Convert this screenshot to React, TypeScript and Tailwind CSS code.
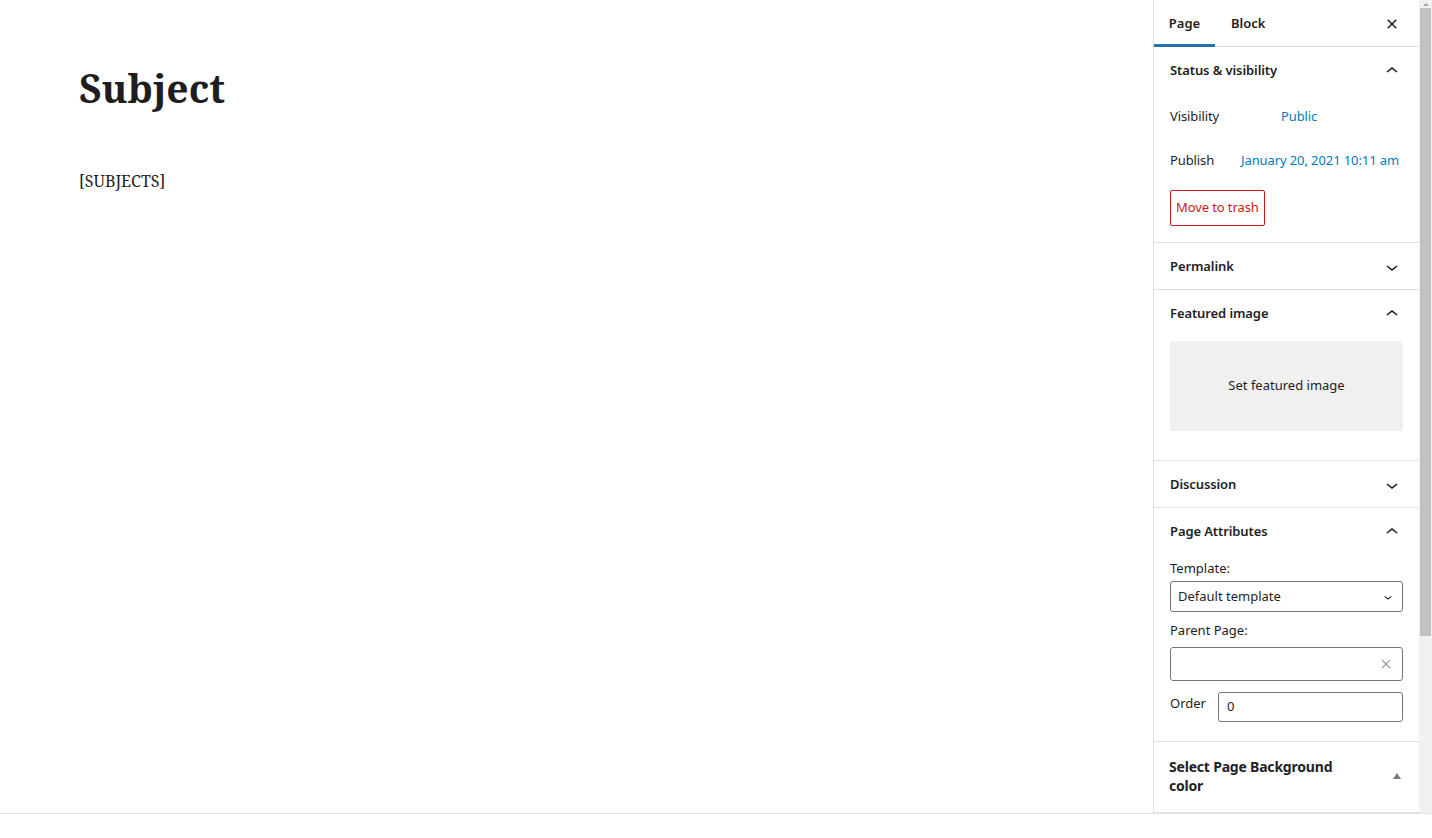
import React from "react";

const sans = { fontFamily: '"Noto Sans", "Open Sans", sans-serif' };
const serif = { fontFamily: '"Noto Serif", "DejaVu Serif", serif' };

function ChevronUp() {
  return (
    <svg viewBox="0 0 24 24" className="h-6 w-6 fill-[#1e1e1e]">
      <path d="M6.5 12.4L12 8l5.5 4.4-.9 1.2L12 10l-4.6 3.6-.9-1.2z" />
    </svg>
  );
}

function ChevronDown({ className = "h-6 w-6 fill-[#1e1e1e]" }: { className?: string }) {
  return (
    <svg viewBox="0 0 24 24" className={className}>
      <path d="M17.5 11.6L12 16l-5.5-4.4.9-1.2L12 14l4.6-3.6.9 1.2z" />
    </svg>
  );
}

function CloseSmall({ className }: { className: string }) {
  return (
    <svg viewBox="0 0 24 24" className={className}>
      <path d="M12 13.06l3.712 3.713 1.061-1.06L13.061 12l3.712-3.712-1.06-1.06L12 10.938 8.288 7.227l-1.061 1.06L10.939 12l-3.712 3.712 1.06 1.061L12 13.061z" />
    </svg>
  );
}

function PanelHeader({ title, open }: { title: string; open?: boolean }) {
  return (
    <div className="flex h-[46px] items-center justify-between pl-4 pr-[15px] pt-[2px]">
      <span className="text-[13px] font-semibold tracking-[-0.1px] text-[#1e1e1e]">{title}</span>
      {open ? <ChevronUp /> : <ChevronDown />}
    </div>
  );
}

function Sidebar() {
  return (
    <aside className="flex h-full w-[279px] shrink-0 border-l border-[#e0e0e0] bg-white" style={sans}>
      <div className="flex w-[266px] flex-col">
        {/* tabs */}
        <div className="flex h-[47px] items-center border-b border-[#e0e0e0] pt-[2px]">
          <div className="relative flex h-full w-[61px] items-center justify-center text-[13px] font-semibold text-[#1e1e1e]">
            Page
            <span className="absolute bottom-[-1px] left-0 h-[3px] w-full bg-[#2271b1]" />
          </div>
          <div className="flex h-full items-center px-4 text-[13px] font-semibold text-[#1e1e1e]">Block</div>
          <div className="ml-auto mr-[15px] flex items-center">
            <CloseSmall className="h-6 w-6 fill-[#1e1e1e]" />
          </div>
        </div>

        {/* Status & visibility */}
        <div className="border-b border-[#e0e0e0] pb-4">
          <PanelHeader title="Status & visibility" open />
          <div className="flex h-[44px] items-center px-4 pt-[3px] text-[13px] tracking-[-0.1px]">
            <span className="w-[111px] text-[#1e1e1e]">Visibility</span>
            <span className="text-[#007cba]">Public</span>
          </div>
          <div className="flex h-[44px] items-center px-4 pt-[3px] text-[13px] tracking-[-0.1px]">
            <span className="w-[71px] text-[#1e1e1e]">Publish</span>
            <span className="text-[#007cba]">January 20, 2021 10:11 am</span>
          </div>
          <div className="mt-[9px] flex px-4">
            <button className="h-[36px] rounded-[2px] border border-[#cc1818] px-[5px] text-[13px] tracking-[-0.1px] text-[#cc1818]">
              Move to trash
            </button>
          </div>
        </div>

        {/* Permalink */}
        <div className="border-b border-[#e0e0e0]">
          <PanelHeader title="Permalink" />
        </div>

        {/* Featured image */}
        <div className="border-b border-[#e0e0e0] pb-[29px]">
          <PanelHeader title="Featured image" open />
          <div className="mx-4 mt-[5px] flex h-[90px] items-center justify-center rounded-[2px] bg-[#f0f0f0] text-[13px] text-[#1e1e1e]">
            Set featured image
          </div>
        </div>

        {/* Discussion */}
        <div className="border-b border-[#e0e0e0]">
          <PanelHeader title="Discussion" />
        </div>

        {/* Page Attributes */}
        <div className="border-b border-[#e0e0e0] pb-[19px]">
          <PanelHeader title="Page Attributes" open />
          <div className="px-4">
            <div className="mt-[4px] text-[13px] leading-[20px] text-[#1e1e1e]">Template:</div>
            <div className="mt-[3px] flex h-[31px] items-center justify-between rounded-[3px] border border-[#757575] pl-[7px] pr-[6px] text-[13px] text-[#1e1e1e]">
              <span>Default template</span>
              <ChevronDown className="h-[16px] w-[16px] fill-[#1e1e1e]" />
            </div>
            <div className="mt-[8px] text-[13px] leading-[20px] text-[#1e1e1e]">Parent Page:</div>
            <div className="mt-[7px] flex h-[34px] items-center justify-end rounded-[3px] border border-[#757575] pr-[5px]">
              <CloseSmall className="h-[22px] w-[22px] fill-[#a0a0a0]" />
            </div>
            <div className="mt-[11px] flex items-start">
              <span className="w-[48px] pt-[1px] text-[13px] leading-[20px] text-[#1e1e1e]">Order</span>
              <div className="flex h-[30px] flex-1 items-center rounded-[3px] border border-[#757575] pl-[8px] text-[13px] text-[#1e1e1e]">
                0
              </div>
            </div>
          </div>
        </div>

        {/* Background color */}
        <div className="flex h-[71px] items-center justify-between border-b border-[#e0e0e0] pb-[2px] pl-[15px] pr-[18px]">
          <span className="w-[190px] text-[14px] font-bold leading-[19px] tracking-[-0.2px] text-[#1d2327]">Select Page Background color</span>
          <span className="h-0 w-0 border-x-[4px] border-b-[6px] border-x-transparent border-b-[#787c82]" />
        </div>
      </div>

      {/* scrollbar */}
      <div className="flex w-[13px] flex-col bg-[#f1f1f1]">
        <div className="flex h-[8px] items-center justify-center">
          <span className="h-0 w-0 border-x-[3px] border-b-[3px] border-x-transparent border-b-[#a3a3a3]" />
        </div>
        <div className="mx-[1px] h-[628px] bg-[#c1c1c1]" />
      </div>
    </aside>
  );
}

export default function App() {
  return (
    <div className="flex h-[838px] w-[1432px] flex-col bg-white">
      <div className="flex h-[814px] border-b border-[#e0e0e0]">
        <main className="flex-1 pl-[79px] pt-[62px]">
          <h1 className="text-[39px] font-bold leading-[52px] text-[#1e1e1e]" style={serif}>
            Subject
          </h1>
          <p className="mt-[54px] text-[16px] leading-[26px] text-[#1e1e1e]" style={serif}>
            [SUBJECTS]
          </p>
        </main>
        <Sidebar />
      </div>
    </div>
  );
}
